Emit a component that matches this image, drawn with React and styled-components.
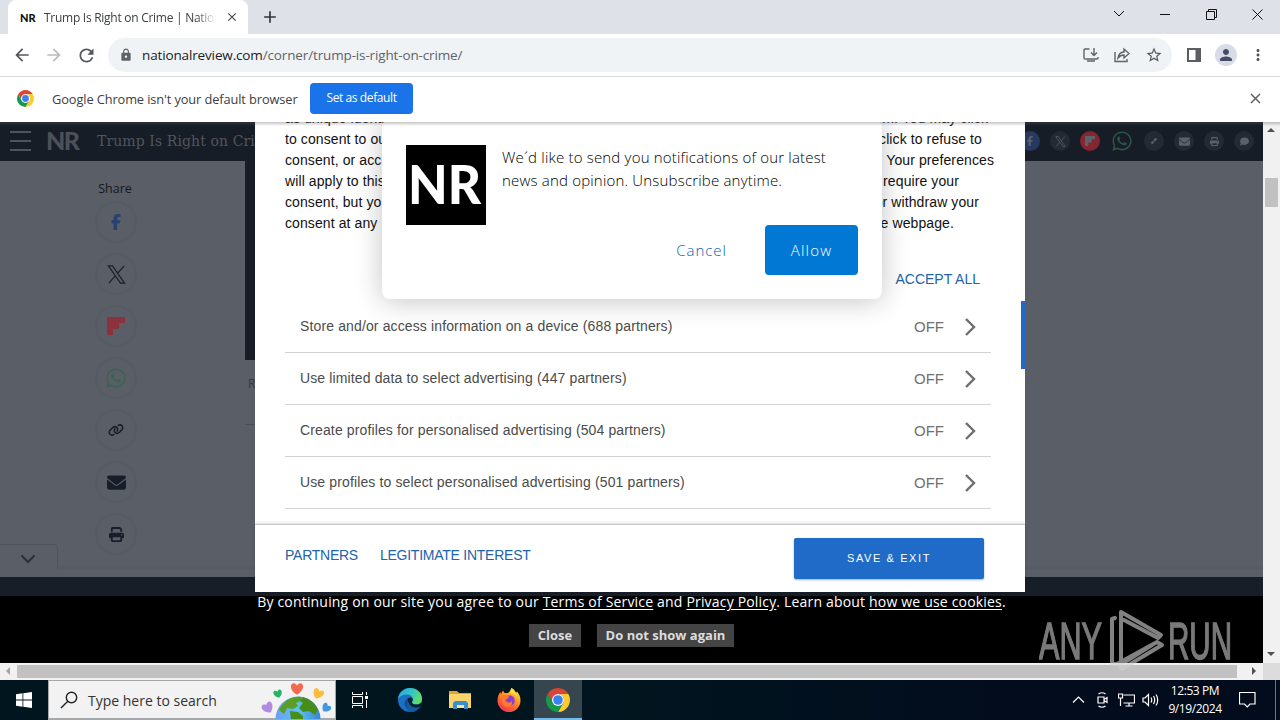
import React from "react";
import styled, { createGlobalStyle, css } from "styled-components";
import {
  MdAdd,
  MdArrowBack,
  MdArrowForward,
  MdClose,
  MdLock,
  MdMoreVert,
  MdPerson,
  MdRefresh,
  MdStarBorder,
} from "react-icons/md";
import {
  FaComment,
  FaEnvelope,
  FaFacebookF,
  FaLink,
  FaPrint,
  FaWhatsapp,
} from "react-icons/fa6";

const consentLines = [
  { left: "as unique identifiers", right: "them. You may click", width: 703 },
  { left: "to consent to our and", right: "click to refuse to", width: 697 },
  { left: "consent, or access", right: "Your preferences", width: 709 },
  { left: "will apply to this", right: "require your", width: 674 },
  { left: "consent, but you", right: "or withdraw your", width: 694 },
  { left: "consent at any", right: "the webpage.", width: 669 },
];

const purposes = [
  "Store and/or access information on a device (688 partners)",
  "Use limited data to select advertising (447 partners)",
  "Create profiles for personalised advertising (504 partners)",
  "Use profiles to select personalised advertising (501 partners)",
];

const Flipboard = ({ size }) => (
  <svg width={size} height={size} viewBox="0 0 18 18" fill="currentColor">
    <path d="M0 0h18v6h-6v6H6v6H0z" />
  </svg>
);

const XLogo = ({ size }) => (
  <svg
    width={size}
    height={size}
    viewBox="0 0 20 20"
    fill="none"
    stroke="currentColor"
    strokeWidth="1.3"
  >
    <path d="M1.500 1h4.300l12.700 18h-4.300zM18 1l-7.300 8.200M8.800 11.200L2 19" />
  </svg>
);

const shareItems = [
  { Icon: FaFacebookF, size: 16, color: "#27426f" },
  { Icon: XLogo, size: 19, color: "#1c202a" },
  { Icon: Flipboard, size: 18, color: "#8b323d" },
  { Icon: FaWhatsapp, size: 22, color: "#3a6452" },
  { Icon: FaLink, size: 16, color: "#181e29" },
  { Icon: FaEnvelope, size: 19, color: "#181e29" },
  { Icon: FaPrint, size: 15, color: "#181e29" },
  { Icon: FaComment, size: 16, color: "#181e29" },
];

const ChromeLogo = ({ size }) => (
  <svg width={size} height={size} viewBox="2 2 44 44">
    <path
      fill="#db4437"
      d="M4.95 13A22 22 0 0 1 43.05 13H24A11 11 0 0 0 14.47 29.5Z"
    />
    <path
      fill="#fdcb2e"
      d="M43.05 13A22 22 0 0 1 24 46L33.53 29.5A11 11 0 0 0 24 13Z"
    />
    <path
      fill="#159a4b"
      d="M24 46A22 22 0 0 1 4.95 13L14.47 29.5A11 11 0 0 0 33.53 29.5Z"
    />
    <circle cx="24" cy="24" r="11" fill="#fff" />
    <circle cx="24" cy="24" r="8.8" fill="#3b82ee" />
  </svg>
);

const EdgeLogo = () => (
  <svg width="24" height="24" viewBox="0 0 24 24">
    <defs>
      <linearGradient id="edgeTop" x1="0" y1="0" x2="1" y2="0.4">
        <stop offset="0" stopColor="#2aa7e0" />
        <stop offset="0.6" stopColor="#35c5c4" />
        <stop offset="1" stopColor="#5fdc6b" />
      </linearGradient>
    </defs>
    <circle cx="12" cy="12" r="12" fill="#1b6fc4" />
    <path
      d="M0 11C1 4 6 0 12 0c7 0 12 5 12 10.500 0 4-3 6-6 6-2.500 0-4-1-4-2 0-.8 1-1 1-2.700C15 9 12.500 6.500 9 6.500 5 6.500 1.500 8.500 0 11z"
      fill="url(#edgeTop)"
    />
    <path
      d="M10 10c-3 2-4 5-2.500 8.500C9 22 13 24 17 23c2-.8 4-2.300 5-4.500-4 2-9 .5-11-2.500-1-2-1.500-4-1-6z"
      fill="#124a91"
    />
    <path
      d="M10 10.500c1-1.500 3.500-1.500 4.500 0 .8 1.500-.8 2-.5 4 .5 1.500 2 2 4 2 2 0 3.800-.5 4.800-1.500l3 1-2 4-3 1-7-2c-3-2-4.500-5-3.800-8.500z"
      fill="#04212d"
    />
    <path
      d="M10 12c0 4 3.500 7.500 8 7.500 2 0 3.500-.5 4.500-1.500-2 4-6 6-10.500 6-3 0-4.500-5-2-12z"
      fill="#155aa5"
    />
  </svg>
);

const FolderLogo = () => (
  <svg width="22" height="20" viewBox="0 0 22 20">
    <path d="M0 1h8l2 2h12v6H0z" fill="#e8a225" />
    <path d="M0 4h22v14H0z" fill="#fbd56b" />
    <path d="M4 19v-6l2-2h11l2 2v6h-4v-4H8v4z" fill="#3a8fd0" />
    <path d="M8 15h7v3H8z" fill="#fbe39b" />
  </svg>
);

const FirefoxLogo = () => (
  <svg width="24" height="24" viewBox="0 0 24 24">
    <defs>
      <linearGradient id="fox" x1="0.8" y1="0" x2="0.2" y2="1">
        <stop offset="0" stopColor="#fff04a" />
        <stop offset="0.45" stopColor="#ff8a1f" />
        <stop offset="1" stopColor="#f0295c" />
      </linearGradient>
    </defs>
    <path
      d="M14.500 0c3 1.500 4 4 4.500 5l1-1.500c2 2.500 3.500 5 3.500 9A11.500 11.500 0 0 1 .5 12.500C.5 9 1.500 6 3.500 4L4 6l2-3.500L7.500 5 11 5c1-1 3-2.500 3.500-5z"
      fill="url(#fox)"
    />
    <circle cx="12.500" cy="12.500" r="5.300" fill="#8a3fd1" />
    <path
      d="M5 8c3-1 5-1 7.500 1-2 .5-1.500 2-4 2.500C9 15 13 15.500 15 13c1 4-2 6.500-5 6C6 18.500 4 14 5 8z"
      fill="#ff7a2a"
    />
    <path d="M14.500 0c3 1.500 5 6 5.500 8-2-2-3-2.500-6-2.500-1-2-.5-4 .5-5.500z" fill="#ffdf3c" />
  </svg>
);

const EarthDoodle = () => (
  <svg width="74" height="38" viewBox="0 0 74 38">
    <defs>
      <linearGradient id="sea" x1="0" y1="0" x2="1" y2="0">
        <stop offset="0" stopColor="#6c9df4" />
        <stop offset="0.5" stopColor="#5cc4f0" />
        <stop offset="1" stopColor="#3a83d4" />
      </linearGradient>
      <path id="heart" d="M0 5C-7 1-6-5-3-5-1-5 0-3 0-3S1-5 3-5C6-5 7 1 0 5z" />
    </defs>
    <circle cx="37" cy="38" r="22.500" fill="url(#sea)" />
    <path
      d="M24 21c4-4 10-6 17-5l-1 4-5 2 2 3-5 3-6-1-3 6-5-4c1-3 4-6 6-8z"
      fill="#5c9d25"
    />
    <path
      d="M42 16c8 2 12 7 15 13l-3 5-6-4-6 1-4-4 4-5-3-2zM29 30l8 1 5 4v4H30z"
      fill="#488c1c"
    />
    <use href="#heart" transform="translate(7 27) rotate(-30) scale(1.05)" fill="#b18be3" />
    <use href="#heart" transform="translate(17 13) rotate(-15) scale(.8)" fill="#26b164" />
    <use href="#heart" transform="translate(36 8) scale(1.15)" fill="#f4694d" />
    <use href="#heart" transform="translate(57 13) rotate(25) scale(1)" fill="#fdbd3b" />
    <use href="#heart" transform="translate(65 27) rotate(40) scale(.85)" fill="#4297e0" />
  </svg>
);

function ChromeFrame() {
  return (
    <>
      <TabStrip>
        <Tab>
          <Favicon>NR</Favicon>
          <TabTitle>Trump Is Right on Crime | National</TabTitle>
          <MdClose size={14} color="#45484d" />
        </Tab>
        <NewTab>
          <MdAdd size={20} />
        </NewTab>
        <WindowButtons>
          <svg width="12" height="8" viewBox="0 0 12 8">
            <path d="M1 1l5 5 5-5" />
          </svg>
          <svg width="11" height="11" viewBox="0 0 11 11">
            <path d="M0 5.500h10" />
          </svg>
          <svg width="11" height="11" viewBox="0 0 11 11">
            <path d="M.5 2.500h8v8h-8zM2.500 2.500v-2h8v8h-2" />
          </svg>
          <svg width="11" height="11" viewBox="0 0 11 11">
            <path d="M.5.5l10 10M10.500.5l-10 10" />
          </svg>
        </WindowButtons>
      </TabStrip>
      <Toolbar>
        <NavButtons>
          <MdArrowBack size={20} />
          <MdArrowForward size={20} color="#babcbe" />
          <MdRefresh size={21} />
        </NavButtons>
        <AddressBar>
          <MdLock size={14} color="#5f6368" />
          <Url>
            nationalreview.com<span>/corner/trump-is-right-on-crime/</span>
          </Url>
          <AddressActions>
            <svg width="16" height="16" viewBox="0 0 16 16">
              <path d="M6.500 2H2.200Q1 2 1 3.200v7.600Q1 12 2.200 12h11.600q1.200 0 1.200-1.200V10M11 1v7M8 5.500l3 3 3-3M4 14h8" />
            </svg>
            <svg width="16" height="16" viewBox="0 0 16 16">
              <path d="M1 5v9.500h12V12M4 11c.4-4 2.500-5.700 6-6V2l5 4.500-5 4.500V8C7.500 8 5.500 9 4 11z" />
            </svg>
            <MdStarBorder size={18} />
          </AddressActions>
        </AddressBar>
        <ToolbarEnd>
          <svg width="14" height="14" viewBox="0 0 14 14">
            <path d="M0 0h14v14H0zM2 2v10h6.500V2z" fill="#5a5d63" fillRule="evenodd" />
          </svg>
          <Avatar>
            <MdPerson size={18} />
          </Avatar>
          <MdMoreVert size={18} />
        </ToolbarEnd>
      </Toolbar>
      <InfoBar>
        <ChromeLogo size={17} />
        <InfoText>Google Chrome isn't your default browser</InfoText>
        <DefaultButton>Set as default</DefaultButton>
        <MdClose size={17} color="#5a5d61" />
      </InfoBar>
    </>
  );
}

function Article() {
  return (
    <ArticlePage>
      <SiteHeader>
        <Burger>
          <i />
          <i />
          <i />
        </Burger>
        <SiteLogo>NR</SiteLogo>
        <Headline>Trump Is Right on Crime</Headline>
        <HeaderShare>
          <Dot $bg="#263960">
            <FaFacebookF size={10} />
          </Dot>
          <Dot>
            <XLogo size={11} />
          </Dot>
          <Dot $bg="#84252f">
            <Flipboard size={10} />
          </Dot>
          <Dot $bg="transparent" $color="#2d5348" $big>
            <FaWhatsapp size={22} />
          </Dot>
          <Dot>
            <svg width="8" height="8" viewBox="0 0 8 8" stroke="currentColor">
              <path d="M1.500 6.500L3.500 4.500M4 4l2.500-2.500" strokeWidth="2.200" />
            </svg>
          </Dot>
          <Dot>
            <FaEnvelope size={11} />
          </Dot>
          <Dot>
            <FaPrint size={9} />
          </Dot>
          <Dot>
            <FaComment size={9} />
          </Dot>
        </HeaderShare>
      </SiteHeader>
      <ArticleBody>
        <ShareColumn>
          <ShareLabel>Share</ShareLabel>
          {shareItems.map(({ Icon, size, color }, i) => (
            <ShareCircle key={i} $color={color}>
              <Icon size={size} />
            </ShareCircle>
          ))}
        </ShareColumn>
        <Photo>
          <PhotoImage />
          <Caption>R</Caption>
          <Rule />
        </Photo>
        <AdBar />
        <AdHandle>
          <svg width="16" height="10" viewBox="0 0 16 10">
            <path d="M1.500 1.500L8 8l6.500-6.500" fill="none" stroke="#2b303a" strokeWidth="2" />
          </svg>
        </AdHandle>
      </ArticleBody>
      <DarkStrip />
      <CookieBar>
        <CookieText>
          By continuing on our site you agree to our <u>Terms of Service</u> and{" "}
          <u>Privacy Policy</u>. Learn about <u>how we use cookies</u>.
        </CookieText>
        <CookieButtons>
          <CookieButton $width={52}>Close</CookieButton>
          <CookieButton $width={137}>Do not show again</CookieButton>
        </CookieButtons>
      </CookieBar>
    </ArticlePage>
  );
}

function ConsentDialog() {
  return (
    <Dialog>
      <DialogScroll>
        <ConsentText>
          {consentLines.map(({ left, right, width }) => (
            <ConsentLine key={left} $width={width}>
              <span>{left}</span>
              <span>{right}</span>
            </ConsentLine>
          ))}
        </ConsentText>
        <AcceptAll>ACCEPT ALL</AcceptAll>
        {purposes.map((name) => (
          <Purpose key={name}>
            <PurposeName>{name}</PurposeName>
            <Off>OFF</Off>
            <svg width="12" height="20" viewBox="0 0 12 20">
              <path d="M2 2l8 8-8 8" fill="none" stroke="#6e6e6e" strokeWidth="2.400" />
            </svg>
          </Purpose>
        ))}
        <DialogThumb />
      </DialogScroll>
      <DialogFooter>
        <FooterLink>PARTNERS</FooterLink>
        <FooterLink>LEGITIMATE INTEREST</FooterLink>
        <SaveButton>SAVE &amp; EXIT</SaveButton>
      </DialogFooter>
    </Dialog>
  );
}

function PushPrompt() {
  return (
    <Prompt>
      <PromptTop>
        <PromptLogo>
          <svg width="80" height="80">
            <text x="2" y="59" textLength="73" lengthAdjust="spacingAndGlyphs">
              NR
            </text>
          </svg>
        </PromptLogo>
        <PromptText>
          <div>We´d like to send you notifications of our latest</div>
          <div>news and opinion. Unsubscribe anytime.</div>
        </PromptText>
      </PromptTop>
      <PromptButtons>
        <CancelButton>Cancel</CancelButton>
        <AllowButton>Allow</AllowButton>
      </PromptButtons>
    </Prompt>
  );
}

function Watermark() {
  return (
    <WatermarkLogo width="196" height="66" viewBox="0 0 196 66">
      <text x="0" y="52" textLength="63" lengthAdjust="spacingAndGlyphs">
        ANY
      </text>
      <text x="129" y="52" textLength="64" lengthAdjust="spacingAndGlyphs">
        RUN
      </text>
      <g fill="none" strokeWidth="4" strokeLinejoin="round" strokeLinecap="round">
        <path d="M82 57V5l40 23-3 3-34-18" />
        <path d="M76 11l-3 1v45h5l40-22 5 3-40 24-2-4 32-20" />
      </g>
    </WatermarkLogo>
  );
}

function Taskbar() {
  return (
    <Bar>
      <TaskButton>
        <svg width="16" height="16" viewBox="0 0 16 16" fill="#fff">
          <path d="M0 2.200l6.500-.9v6.300H0zM7.300 1.200L16 0v7.600H7.300zM0 8.400h6.500v6.300L0 13.800zM7.300 8.400H16V16l-8.700-1.200z" />
        </svg>
      </TaskButton>
      <SearchBox>
        <svg width="18" height="18" viewBox="0 0 18 18">
          <circle cx="10.500" cy="6.500" r="5.200" />
          <path d="M6.800 10.200L0 17" />
        </svg>
        <SearchText>Type here to search</SearchText>
        <EarthDoodle />
      </SearchBox>
      <TaskButton>
        <svg width="18" height="18" viewBox="0 0 18 18" fill="none" stroke="#fff">
          <path d="M1.500 1v2.500h10V1M1.500 17v-2.500h10V17M1.500 5.500v7h10v-7zM15.500 1v3M15.500 9v8" />
          <path d="M14 5h3v3h-3z" fill="#fff" stroke="none" />
        </svg>
      </TaskButton>
      <TaskButton $width={52}>
        <EdgeLogo />
      </TaskButton>
      <TaskButton>
        <FolderLogo />
      </TaskButton>
      <TaskButton $width={50}>
        <FirefoxLogo />
      </TaskButton>
      <TaskButton $active>
        <ChromeLogo size={24} />
      </TaskButton>
      <Tray>
        <svg width="17" height="8" viewBox="0 0 12 8">
          <path d="M.5 6.500L6 1l5.500 5.500" />
        </svg>
        <svg width="17" height="16" viewBox="0 0 12 16">
          <path d="M1.500 5h6v6h-6zM7.500 7.500l3-2v5l-3-2M2 2q3.500-2.500 7 0M2 14q3.500 2.500 7 0" />
        </svg>
        <svg width="17" height="14" viewBox="0 0 17 14">
          <path d="M5.500 2h11v8H5.500M11 10v3M7.500 13h7M.5 1h4v4h-4zM2.500 5v8" />
        </svg>
        <svg width="17" height="14" viewBox="0 0 17 14">
          <path d="M1 5h2l3.500-3.500v11L3 9H1zM9 4.500q1.500 2.500 0 5M11.500 3q2.500 4 0 8M14 1.500q3.500 5.500 0 11" />
        </svg>
      </Tray>
      <Clock>
        <div>12:53 PM</div>
        <div>9/19/2024</div>
      </Clock>
      <ActionCenter>
        <svg width="17" height="16" viewBox="0 0 17 16">
          <path d="M.5.500h15.500v11.500h-5L8.300 14.800 5.500 12h-5z" />
        </svg>
      </ActionCenter>
    </Bar>
  );
}

function App() {
  return (
    <Screen>
      <GlobalStyle />
      <ChromeFrame />
      <Viewport>
        <Article />
        <VerticalScroll>
          <Arrow $dir="up" />
          <VerticalThumb />
          <Arrow $dir="down" />
        </VerticalScroll>
        <ConsentDialog />
        <PushPrompt />
        <TopShade />
      </Viewport>
      <HorizontalScroll>
        <Arrow $dir="left" />
        <HorizontalThumb />
        <Arrow $dir="right" />
        <Corner />
      </HorizontalScroll>
      <Taskbar />
      <Watermark />
    </Screen>
  );
}

const GlobalStyle = createGlobalStyle`
  * {
    box-sizing: border-box;
  }
  body {
    margin: 0;
    overflow: hidden;
  }
  svg {
    flex: none;
  }
`;
const Screen = styled.div`
  position: relative;
  width: 1280px;
  height: 720px;
  display: flex;
  flex-direction: column;
  overflow: hidden;
  font-family: "Noto Sans", sans-serif;
  white-space: nowrap;
`;
const TabStrip = styled.div`
  height: 34px;
  display: flex;
  padding-left: 8px;
  background-color: #dee1e8;
`;
const Tab = styled.div`
  width: 240px;
  display: flex;
  align-items: center;
  padding-left: 12px;
  background-color: #fff;
  border-radius: 8px 8px 0 0;
`;
const Favicon = styled.span`
  width: 24px;
  font: 900 11px "Lato", sans-serif;
  color: #111;
`;
const TabTitle = styled.span`
  width: 173px;
  overflow: hidden;
  margin-right: 8px;
  font: 12px "Open Sans", sans-serif;
  letter-spacing: -0.27px;
  color: #3c4043;
  mask-image: linear-gradient(90deg, #000 152px, transparent 172px);
`;
const NewTab = styled.div`
  padding: 7px 0 0 12px;
  color: #35363a;
`;
const WindowButtons = styled.div`
  display: flex;
  align-items: center;
  gap: 35px;
  margin: 0 17px 6px auto;
  & path {
    fill: none;
    stroke: #111;
  }
`;
const Toolbar = styled.div`
  height: 43px;
  display: flex;
  align-items: center;
  background-color: #fff;
  border-bottom: 1px solid #d5d7da;
`;
const NavButtons = styled.div`
  width: 108px;
  display: flex;
  gap: 12px;
  padding-left: 12px;
  color: #54575c;
`;
const AddressBar = styled.div`
  width: 1064px;
  height: 34px;
  display: flex;
  align-items: center;
  padding: 0 9px 0 11px;
  border-radius: 17px;
  background-color: #f0f3f6;
`;
const Url = styled.span`
  margin-left: 9px;
  font: 13.5px "Open Sans", sans-serif;
  letter-spacing: -0.14px;
  color: #202124;
  & span {
    color: #5f6368;
  }
`;
const AddressActions = styled.div`
  display: flex;
  align-items: center;
  gap: 15px;
  margin-left: auto;
  color: #54575c;
  & svg:not(:last-child) path {
    fill: none;
    stroke: #5f6368;
    stroke-width: 1.400;
  }
`;
const ToolbarEnd = styled.div`
  display: flex;
  align-items: center;
  gap: 13px;
  margin-left: 15px;
  color: #4e5157;
`;
const Avatar = styled.div`
  width: 22px;
  height: 22px;
  display: flex;
  align-items: center;
  justify-content: center;
  margin-left: 1px;
  margin-right: -1px;
  border-radius: 50%;
  background-color: #d9dce6;
  color: #474c68;
`;
const InfoBar = styled.div`
  height: 45px;
  display: flex;
  align-items: center;
  padding: 0 16px 2px 17px;
  background-color: #fff;
  & svg:last-child {
    margin-left: auto;
  }
`;
const InfoText = styled.span`
  width: 246px;
  margin: 0 12px 0 18px;
  font: 12.8px "Open Sans", sans-serif;
  letter-spacing: -0.1px;
  color: #3c4043;
`;
const DefaultButton = styled.div`
  width: 103px;
  height: 31px;
  border-radius: 4px;
  background-color: #1a73e8;
  color: #fff;
  font: 12px/30px "Open Sans", sans-serif;
  letter-spacing: -0.4px;
  text-align: center;
`;
const Viewport = styled.div`
  position: relative;
  height: 541px;
  display: flex;
  overflow: hidden;
`;
const TopShade = styled.div`
  position: absolute;
  top: 0;
  left: 0;
  width: 1280px;
  height: 5px;
  margin-top: -1px;
  background: linear-gradient(rgba(90, 90, 90, 0.45), transparent);
`;
const ArticlePage = styled.div`
  width: 1263px;
  display: flex;
  flex-direction: column;
`;
const SiteHeader = styled.header`
  height: 39px;
  display: flex;
  align-items: center;
  padding: 0 9px 1px 10px;
  background-color: #171d27;
`;
const Burger = styled.div`
  width: 21px;
  display: flex;
  flex-direction: column;
  gap: 7px;
  & i {
    height: 2px;
    background-color: #4f535b;
  }
`;
const SiteLogo = styled.div`
  width: 51px;
  margin: 0 0 3px 15px;
  font: 900 25px "Lato", sans-serif;
  letter-spacing: -1.500px;
  color: #4c5058;
`;
const Headline = styled.div`
  font: 14px "DejaVu Serif", serif;
  letter-spacing: 0.1px;
  color: #51555d;
`;
const HeaderShare = styled.div`
  display: flex;
  align-items: center;
  gap: 10px;
  margin-left: auto;
`;
const Dot = styled.div`
  width: ${(props) => (props.$big ? 24 : 20)}px;
  height: 20px;
  display: flex;
  align-items: center;
  justify-content: center;
  border-radius: 50%;
  background-color: ${(props) => props.$bg ?? "#242a34"};
  color: ${(props) => props.$color ?? "#5c6069"};
`;
const ArticleBody = styled.div`
  position: relative;
  height: 416px;
  display: flex;
  overflow: hidden;
  background-color: #5a5e67;
`;
const ShareColumn = styled.div`
  width: 245px;
  display: flex;
  flex-direction: column;
  gap: 10px;
  padding: 18px 0 0 95px;
`;
const ShareLabel = styled.div`
  width: 40px;
  height: 12px;
  font: 12.5px/20px "Open Sans", sans-serif;
  text-align: center;
  color: #15181f;
`;
const ShareCircle = styled.div`
  width: 42px;
  height: 42px;
  flex: none;
  display: flex;
  align-items: center;
  justify-content: center;
  border: 2px solid #565b64;
  border-radius: 50%;
  color: ${(props) => props.$color};
`;
const Photo = styled.div`
  width: 780px;
`;
const PhotoImage = styled.div`
  height: 199px;
  background-color: #171c26;
`;
const Caption = styled.div`
  height: 64px;
  padding: 15px 0 0 3px;
  font: 12px "Open Sans", sans-serif;
  color: #343943;
`;
const Rule = styled.div`
  width: 780px;
  height: 1px;
  background-color: #484d57;
`;
const AdHandle = styled.div`
  position: absolute;
  left: 0;
  bottom: 7px;
  width: 58px;
  height: 26px;
  display: flex;
  align-items: center;
  justify-content: center;
  padding-top: 3px;
  padding-right: 2px;
  border: 1px solid #4f535d;
  border-left: 0;
  border-bottom: 0;
  border-radius: 0 5px 0 0;
  background-color: #5a5e67;
`;
const AdBar = styled.div`
  position: absolute;
  left: 0;
  bottom: 0;
  width: 1263px;
  height: 12px;
  background: linear-gradient(#595d66, #565a64 4px, #5a5e67 5px);
`;
const DarkStrip = styled.div`
  height: 19px;
  background-color: #181e28;
`;
const CookieBar = styled.div`
  height: 67px;
  display: flex;
  flex-direction: column;
  align-items: center;
  background-color: #000;
`;
const CookieText = styled.div`
  height: 28px;
  margin-top: -4px;
  font: 14px/20px "Open Sans", sans-serif;
  letter-spacing: 0.18px;
  color: #fff;
  & u {
    text-underline-offset: 2px;
  }
`;
const CookieButtons = styled.div`
  display: flex;
  gap: 16px;
  margin-top: 4px;
`;
const CookieButton = styled.div`
  width: ${(props) => props.$width}px;
  height: 23px;
  background-color: #444;
  color: #ddd;
  font: bold 13px/23px "Open Sans", sans-serif;
  text-align: center;
`;
const Dialog = styled.section`
  position: absolute;
  left: 255px;
  top: 0;
  width: 770px;
  height: 470px;
  display: flex;
  flex-direction: column;
  background-color: #fff;
  font-family: "Liberation Sans", Arial, sans-serif;
`;
const DialogScroll = styled.div`
  position: relative;
  height: 402px;
  padding: 0 34px 0 30px;
  overflow: hidden;
`;
const ConsentText = styled.div`
  margin-top: -14px;
  font-size: 14px;
  line-height: 21px;
  color: #111;
`;
const ConsentLine = styled.div`
  width: ${(props) => props.$width}px;
  display: flex;
  justify-content: space-between;
  letter-spacing: 0.1px;
`;
const linkStyle = css`
  font-size: 14px;
  color: #2163ad;
`;
const AcceptAll = styled.div`
  ${linkStyle}
  height: 67px;
  padding: 37px 11px 0 0;
  line-height: 16px;
  text-align: right;
`;
const Purpose = styled.div`
  height: 52px;
  display: flex;
  align-items: center;
  padding: 0 15px;
  border-bottom: 1px solid #d2d2d2;
  font-size: 14px;
  color: #4b4b4b;
`;
const PurposeName = styled.span`
  margin-bottom: 2px;
  letter-spacing: 0.13px;
`;
const Off = styled.span`
  margin: 0 20px 0 auto;
  font-size: 15px;
  color: #707070;
`;
const DialogThumb = styled.div`
  position: absolute;
  right: 0;
  top: 179px;
  width: 4px;
  height: 68px;
  background-color: #216bc8;
`;
const DialogFooter = styled.footer`
  z-index: 1;
  height: 68px;
  display: flex;
  align-items: flex-start;
  gap: 22px;
  padding: 13px 41px 0 30px;
  border-top: 1px solid #c8c8c8;
  background-color: #fff;
  box-shadow: 0 -1px 3px rgba(0, 0, 0, 0.15);
`;
const FooterLink = styled.span`
  ${linkStyle}
  line-height: 34px;
  letter-spacing: -0.25px;
`;
const SaveButton = styled.div`
  width: 190px;
  height: 41px;
  margin-left: auto;
  border-radius: 2px;
  background-color: #216bc8;
  box-shadow: 0 1px 2px rgba(33, 107, 200, 0.5);
  color: #fff;
  font-size: 11px;
  line-height: 41px;
  letter-spacing: 1.600px;
  text-align: center;
`;
const Prompt = styled.section`
  position: absolute;
  left: 382px;
  top: -3px;
  width: 500px;
  height: 180px;
  padding: 26px 24px 24px;
  border-radius: 8px;
  background-color: #fff;
  box-shadow: 0 2px 28px rgba(0, 0, 0, 0.24);
`;
const PromptTop = styled.div`
  display: flex;
  gap: 16px;
`;
const PromptLogo = styled.div`
  width: 80px;
  height: 80px;
  background-color: #000;
  & text {
    font: 900 54px "Lato", sans-serif;
    fill: #fff;
  }
`;
const PromptText = styled.div`
  padding-top: 1px;
  font: 300 15px/23px "Open Sans", sans-serif;
  letter-spacing: 0.19px;
  color: #000;
`;
const PromptButtons = styled.div`
  display: flex;
  justify-content: flex-end;
`;
const CancelButton = styled.div`
  padding-right: 38px;
  font: 300 15px/50px "Open Sans", sans-serif;
  letter-spacing: 1px;
  color: #0a62b0;
`;
const AllowButton = styled.div`
  width: 93px;
  height: 50px;
  border-radius: 4px;
  background-color: #0078d4;
  color: #fff;
  font: 300 15px/50px "Open Sans", sans-serif;
  letter-spacing: 1.200px;
  text-align: center;
`;
const VerticalScroll = styled.div`
  width: 17px;
  display: flex;
  flex-direction: column;
  align-items: center;
  background-color: #f1f1f1;
`;
const VerticalThumb = styled.div`
  width: 13px;
  height: 29px;
  margin: 39px 0 auto;
  background-color: #c1c1c1;
`;
const arrows = {
  up: "M4 10h8L8 6z",
  down: "M4 6h8l-4 4z",
  left: "M10 4v8L6 8z",
  right: "M6 4v8l4-4z",
};
const Arrow = ({ $dir }) => (
  <svg width="17" height="17" viewBox="0 0 17 17">
    <path d={arrows[$dir]} fill={$dir === "left" ? "#a3a3a3" : "#505050"} />
  </svg>
);
const HorizontalScroll = styled.div`
  height: 17px;
  display: flex;
  align-items: center;
  background-color: #f1f1f1;
`;
const HorizontalThumb = styled.div`
  width: 1220px;
  height: 13px;
  margin-right: 9px;
  background-color: #c1c1c1;
`;
const Corner = styled.div`
  width: 17px;
  height: 17px;
  background-color: #dcdcdc;
`;
const WatermarkLogo = styled.svg`
  position: absolute;
  left: 1039px;
  top: 607px;
  opacity: 0.62;
  & text {
    font: 52px "Liberation Sans", sans-serif;
    fill: #c4c4c4;
    stroke: #c4c4c4;
    stroke-width: 1.500;
  }
  & g {
    stroke: #d0d0d0;
  }
`;
const Bar = styled.footer`
  height: 40px;
  display: flex;
  background: linear-gradient(90deg, #00151d 0, #00151f 600px, #020c1d 1000px);
  color: #fff;
`;
const TaskButton = styled.div`
  width: ${(props) => props.$width ?? 48}px;
  height: 40px;
  display: flex;
  align-items: center;
  justify-content: center;
  ${(props) =>
    props.$active &&
    css`
      padding-top: 2px;
      background-color: #35464e;
      border-bottom: 2px solid #76b9ed;
    `}
`;
const SearchBox = styled.div`
  width: 288px;
  display: flex;
  align-items: center;
  padding: 0 0 0 12px;
  border: 1px solid #a5a8aa;
  border-bottom-width: 2px;
  background-color: #f2f2f2;
  & > svg:first-child {
    margin-right: 9px;
    overflow: visible;
    fill: none;
    stroke: #222;
    stroke-width: 1.400;
  }
  & > svg:last-child {
    margin: 0 0 0 auto;
  }
`;
const SearchText = styled.span`
  padding-top: 2px;
  font: 14px "Open Sans", sans-serif;
  color: #333;
`;
const Tray = styled.div`
  display: flex;
  align-items: center;
  gap: 7px;
  margin-left: auto;
  & path {
    fill: none;
    stroke: #fff;
    stroke-width: 1.200;
  }
`;
const Clock = styled.div`
  width: 72px;
  padding-top: 2px;
  font: 12px/18px "Open Sans", sans-serif;
  letter-spacing: -0.4px;
  text-align: center;
`;
const ActionCenter = styled.div`
  width: 45px;
  display: flex;
  align-items: center;
  padding-left: 8px;
  border-right: 1px solid #6b7480;
  margin-right: 4px;
  & path {
    fill: none;
    stroke: #fff;
    stroke-width: 1.200;
  }
`;

export default App;
